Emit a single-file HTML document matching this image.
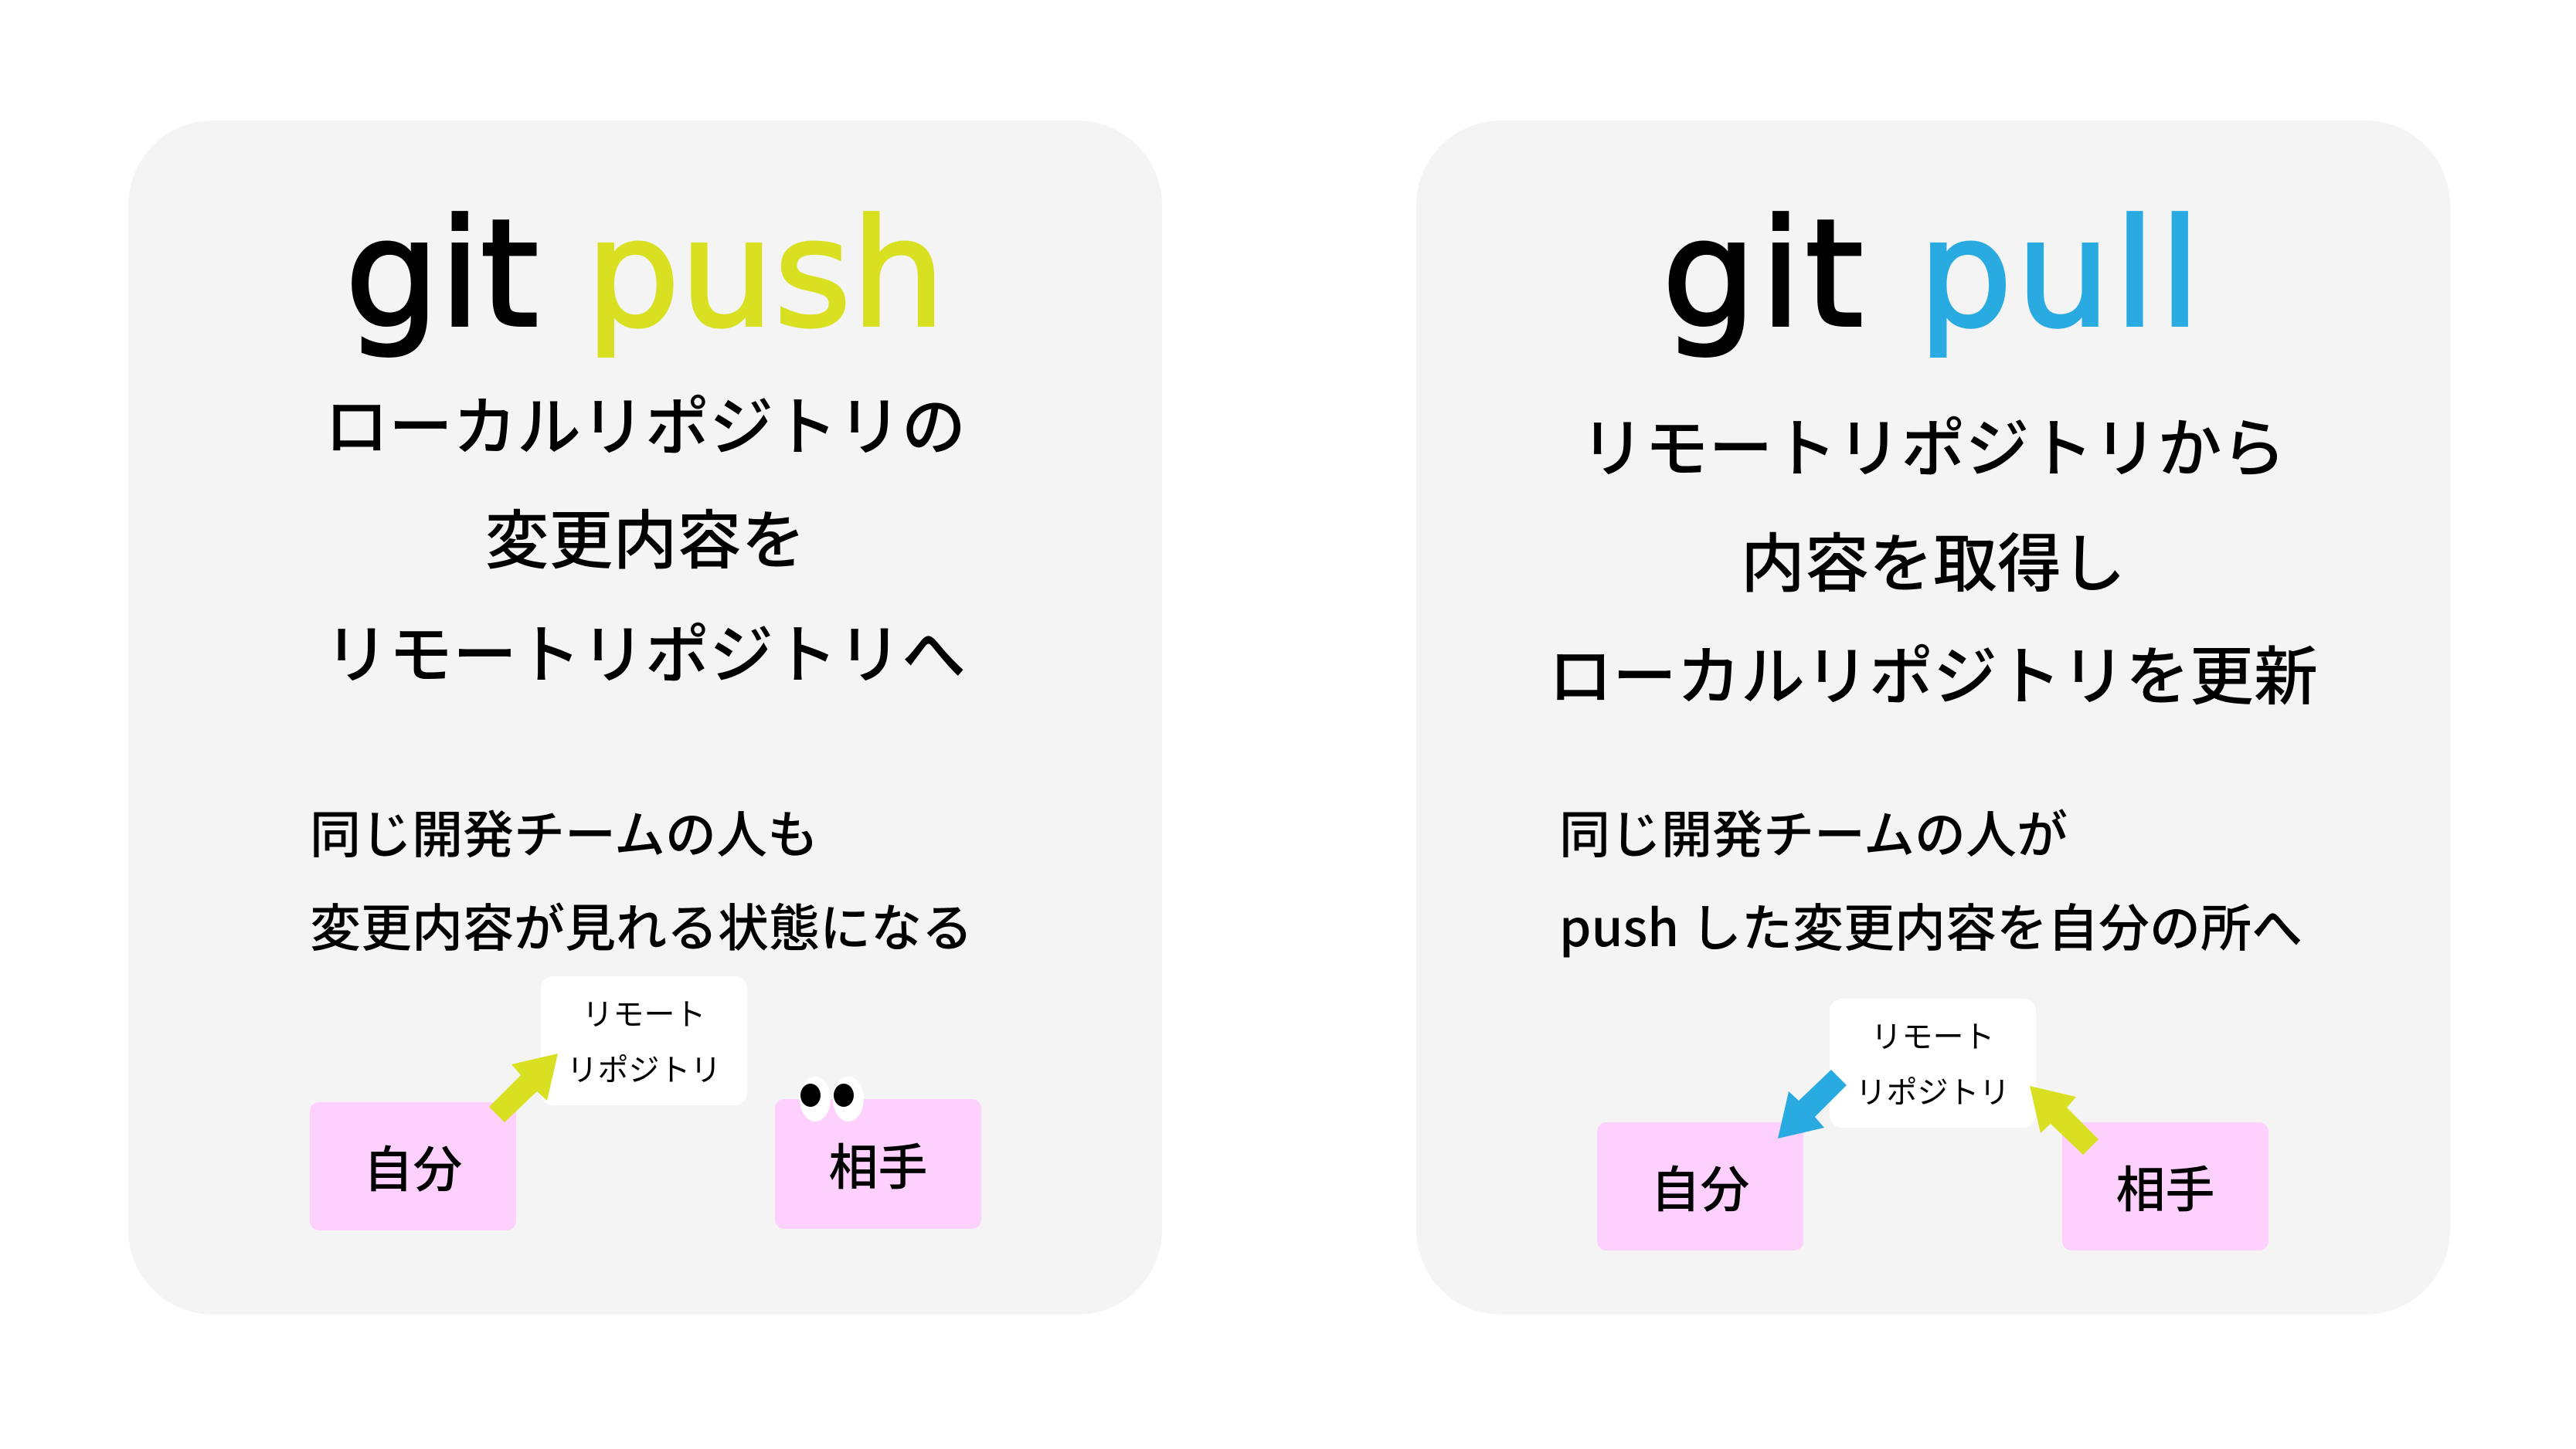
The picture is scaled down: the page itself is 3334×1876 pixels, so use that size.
<!DOCTYPE html>
<html><head><meta charset="utf-8"><style>
*{margin:0;padding:0;box-sizing:border-box}
body{width:3334px;height:1876px;background:#fff;position:relative;overflow:hidden;font-family:"Liberation Sans","Noto Sans CJK JP",sans-serif;color:#000}
.card{position:absolute;top:156px;width:1338px;height:1546px;background:#f4f4f4;border-radius:110px}
.t{position:absolute;white-space:nowrap;line-height:1}
.title{font-family:"DejaVu Sans",sans-serif;font-size:192px;text-align:center;width:1338px;-webkit-text-stroke:4px #000}
.c{text-align:center;width:1338px;font-size:83px;font-family:"Noto Sans CJK JP",sans-serif;font-weight:500}
.b{font-size:66px;font-family:"Noto Sans CJK JP",sans-serif;font-weight:500}
.pink{position:absolute;background:#fdd0fd;border-radius:12px;width:267px;height:166px;display:flex;align-items:center;justify-content:center;font-size:64px;font-family:"Noto Sans CJK JP",sans-serif;font-weight:500}
.rem{position:absolute;background:#fff;border-radius:16px;width:267px;height:167px;font-family:"Noto Sans CJK JP",sans-serif;font-size:40px;text-align:center;line-height:72px;padding-top:10px}
</style></head><body>
<div class="card" style="left:166px"></div>
<div class="card" style="left:1833px"></div>

<div class="t title" style="left:166px;top:260px">git <span style="color:#d9e021;-webkit-text-stroke:4px #d9e021">push</span></div>
<div class="t c" style="left:166px;top:505px">ローカルリポジトリの</div>
<div class="t c" style="left:166px;top:652px">変更内容を</div>
<div class="t c" style="left:166px;top:800px">リモートリポジトリへ</div>
<div class="t b" style="left:401px;top:1043px">同じ開発チームの人も</div>
<div class="t b" style="left:401px;top:1164px">変更内容が見れる状態になる</div>
<div class="pink" style="left:401px;top:1427px">自分</div>
<div class="pink" style="left:1003px;top:1423px;height:168px">相手</div>
<div class="rem" style="left:700px;top:1264px">リモート<br>リポジトリ</div>

<div class="t title" style="left:1833px;top:260px;letter-spacing:5px">git <span style="color:#29abe2;-webkit-text-stroke:4px #29abe2">pull</span></div>
<div class="t c" style="left:1833px;top:533px">リモートリポジトリから</div>
<div class="t c" style="left:1833px;top:682px">内容を取得し</div>
<div class="t c" style="left:1833px;top:828px">ローカルリポジトリを更新</div>
<div class="t b" style="left:2018px;top:1043px">同じ開発チームの人が</div>
<div class="t b" style="left:2018px;top:1164px">push した変更内容を自分の所へ</div>
<div class="pink" style="left:2067px;top:1453px">自分</div>
<div class="pink" style="left:2669px;top:1453px">相手</div>
<div class="rem" style="left:2368px;top:1293px">リモート<br>リポジトリ</div>

<svg width="3334" height="1876" style="position:absolute;left:0;top:0">
<polygon fill="#d9e021" points="633,1433 674,1392 662,1378 722,1364 708,1425 695,1413 653,1453"/>
<g transform="translate(-6,0)">
<polygon fill="#29abe2" points="2396,1405 2355,1446 2367,1460 2307,1474 2321,1413 2334,1425 2376,1385"/>
<polygon fill="#d9e021" points="2722,1475 2681,1434 2693,1420 2633,1406 2647,1467 2660,1455 2702,1495"/>
</g>
<ellipse cx="1055" cy="1423" rx="20" ry="29" fill="#fff"/>
<ellipse cx="1098" cy="1423" rx="20" ry="29" fill="#fff"/>
<ellipse cx="1049" cy="1418" rx="13" ry="15" fill="#000"/>
<ellipse cx="1092" cy="1418" rx="13" ry="15" fill="#000"/>
</svg>
</body></html>
